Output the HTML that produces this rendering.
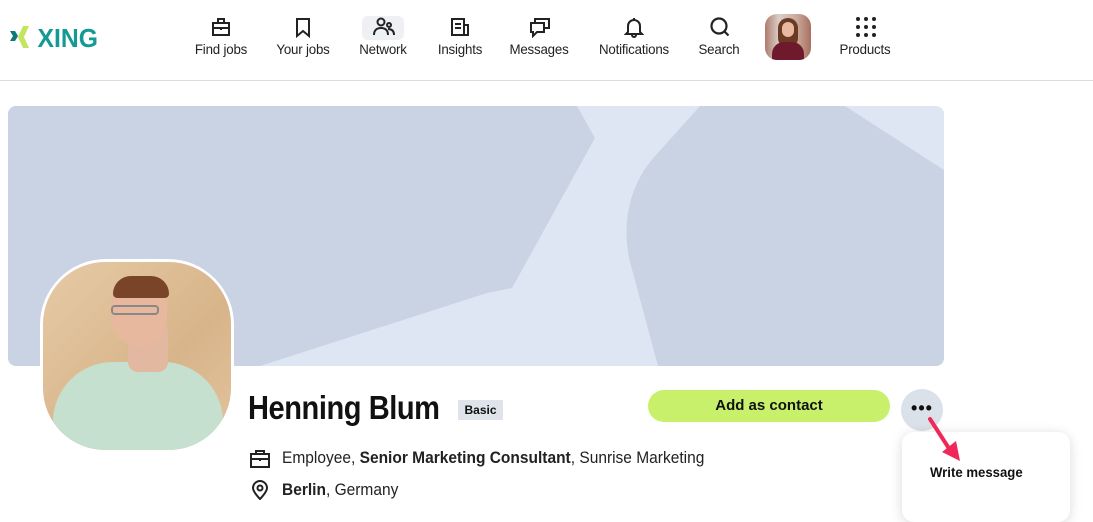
<!DOCTYPE html>
<html><head><meta charset="utf-8"><style>
*{margin:0;padding:0;box-sizing:border-box}
body{width:1093px;height:504px;overflow:hidden;background:#fff;font-family:"Liberation Sans",sans-serif;color:#111;position:relative}
.nav{position:absolute;left:0;top:0;width:1093px;height:81px;border-bottom:1px solid #dcdcdc}
.item{position:absolute;top:0;height:80px;text-align:center;font-size:14px;color:#222}
.item svg{position:absolute;top:16px;left:50%;margin-left:-10px}
.item span{position:absolute;top:41px;left:50%;transform:translateX(-50%) scaleX(0.95);white-space:nowrap;letter-spacing:-0.2px}
.abs{position:absolute}
</style></head><body>
<div class="nav">
  <div class="abs" style="left:10px;top:22px;">
    <svg width="100" height="30" viewBox="0 0 100 30">
      <path d="M0 9 L5 9 L8 14 L5 19 L0 19 L3 14 Z" fill="#0b7a78"/>
      <path d="M13 4 L19 4 L14 15 L19 26 L13 26 L8 15 Z" fill="#c6e55f"/>
      <text x="29" y="25" font-family="Liberation Sans" font-weight="bold" font-size="26" fill="#139a94" transform="scale(0.95,1)">XING</text>
    </svg>
  </div>
  <div class="item" style="left:191px;width:60px"><svg width="20" height="22" viewBox="0 0 20 22" fill="none" stroke="#222" stroke-width="2"><rect x="2" y="7" width="16" height="12"/><path d="M7 7V3h6v4M2 12h16M10 11v3"/></svg><span>Find jobs</span></div>
  <div class="item" style="left:273px;width:60px"><svg width="20" height="22" viewBox="0 0 20 22" fill="none" stroke="#222" stroke-width="2"><path d="M4 3h12v17l-6-5-6 5z"/></svg><span>Your jobs</span></div>
  <div class="abs" style="left:362px;top:16px;width:42px;height:24px;background:#eef0f4;border-radius:6px"></div>
  <div class="item" style="left:353px;width:60px"><svg width="22" height="22" viewBox="0 0 22 22" fill="none" stroke="#222" stroke-width="2"><circle cx="8" cy="6" r="3.5"/><path d="M1 19c0-5 3-7 7-7s7 2 7 7"/><circle cx="16" cy="9" r="2"/><path d="M15 13c4 0 6 2 6 6"/></svg><span>Network</span></div>
  <div class="item" style="left:430px;width:60px"><svg width="20" height="22" viewBox="0 0 20 22" fill="none" stroke="#222" stroke-width="2"><path d="M2 3h12v16H2zM14 9h4v10h-4M5 8h6M5 12h6"/></svg><span>Insights</span></div>
  <div class="item" style="left:505px;width:68px"><svg width="22" height="22" viewBox="0 0 22 22" fill="none" stroke="#222" stroke-width="2"><path d="M2 7h13v9H8l-4 4v-4H2zM6 7V3h14v9h-5"/></svg><span>Messages</span></div>
  <div class="item" style="left:592px;width:84px"><svg width="20" height="22" viewBox="0 0 20 22" fill="none" stroke="#222" stroke-width="2"><path d="M10 2v2M4 16V10a6 6 0 0112 0v6l2 2H2zM8 19a2 2 0 004 0"/></svg><span>Notifications</span></div>
  <div class="item" style="left:694px;width:50px"><svg width="22" height="22" viewBox="0 0 22 22" fill="none" stroke="#222" stroke-width="2.2"><circle cx="10" cy="10" r="7.5"/><path d="M15.5 15.5l4 4"/></svg><span>Search</span></div>
  <div class="abs" style="left:765px;top:14px;width:46px;height:46px;border-radius:12px;overflow:hidden;background:linear-gradient(90deg,#b07a6c,#d8cfc8 30%,#c9a89a 70%,#a87060)">
    <div class="abs" style="left:13px;top:4px;width:20px;height:30px;border-radius:10px;background:#6a3a22"></div>
    <div class="abs" style="left:17px;top:8px;width:12px;height:15px;border-radius:6px;background:#e8b8a0"></div>
    <div class="abs" style="left:7px;top:28px;width:32px;height:22px;border-radius:12px 12px 0 0;background:#6e1a2c"></div>
  </div>
  <div class="item" style="left:835px;width:60px"><svg width="22" height="22" viewBox="0 0 22 22" fill="#222"><circle cx="3" cy="3" r="2"/><circle cx="11" cy="3" r="2"/><circle cx="19" cy="3" r="2"/><circle cx="3" cy="11" r="2"/><circle cx="11" cy="11" r="2"/><circle cx="19" cy="11" r="2"/><circle cx="3" cy="19" r="2"/><circle cx="11" cy="19" r="2"/><circle cx="19" cy="19" r="2"/></svg><span>Products</span></div>
</div>

<svg class="abs" style="left:8px;top:106px" width="936" height="260" viewBox="8 106 936 260">
  <defs><clipPath id="c"><rect x="8" y="106" width="936" height="260" rx="8"/></clipPath></defs>
  <g clip-path="url(#c)">
    <rect x="8" y="106" width="936" height="260" fill="#dfe6f3"/>
    <path d="M8 106 L577 106 L595 138 L512 288 L487 293 L260 366 L8 366Z" fill="#c9d3e3"/>
    <path d="M700 106 L845 106 L944 170 L944 366 L658 366 L630 262 Q622 228 632 196 Q640 172 656 155 Z" fill="#c9d3e3"/>
  </g>
</svg>

<div class="abs" style="left:40px;top:259px;width:194px;height:194px;border-radius:34%/34%;background:#fff;padding:3px">
  <div style="width:100%;height:100%;border-radius:33%;overflow:hidden;position:relative;background:linear-gradient(135deg,#e6cba6,#d8b48a 60%,#e2c49e)">
    <div class="abs" style="left:10px;top:100px;width:170px;height:110px;border-radius:60px 60px 0 0;background:#c6e0d0"></div>
    <div class="abs" style="left:85px;top:60px;width:40px;height:50px;background:#e2b8a0;border-radius:10px"></div>
    <div class="abs" style="left:68px;top:18px;width:56px;height:66px;border-radius:26px 26px 28px 28px;background:#e8b89e"></div>
    <div class="abs" style="left:70px;top:14px;width:56px;height:22px;border-radius:26px 26px 6px 6px;background:#7a4428"></div>
    <div class="abs" style="left:68px;top:43px;width:48px;height:10px;border:2px solid #888;border-radius:4px"></div>
  </div>
</div>

<div class="abs" style="left:248px;top:389px;font-size:33px;font-weight:bold;letter-spacing:-0.5px;color:#111;transform:scaleX(0.88);transform-origin:left top;white-space:nowrap">Henning Blum</div>
<div class="abs" style="left:458px;top:400px;width:45px;height:20px;background:#dfe3ea;font-size:12px;font-weight:bold;text-align:center;line-height:20px">Basic</div>

<svg class="abs" style="left:250px;top:449px" width="20" height="20" viewBox="0 0 20 20" fill="none" stroke="#222" stroke-width="2"><rect x="1" y="5" width="18" height="13"/><path d="M6 5V2h8v3M1 10h18M10 9v3"/></svg>
<div class="abs" style="left:282px;top:449px;font-size:16.5px;color:#222;transform:scaleX(0.94);transform-origin:left top;white-space:nowrap">Employee, <b>Senior Marketing Consultant</b>, Sunrise Marketing</div>
<svg class="abs" style="left:251px;top:480px" width="18" height="20" viewBox="0 0 18 20" fill="none" stroke="#222" stroke-width="2"><path d="M9 19s-7-7-7-11a7 7 0 0114 0c0 4-7 11-7 11z"/><circle cx="9" cy="8" r="2.5"/></svg>
<div class="abs" style="left:282px;top:481px;font-size:16.5px;color:#222;transform:scaleX(0.94);transform-origin:left top;white-space:nowrap"><b>Berlin</b>, Germany</div>

<div class="abs" style="left:648px;top:390px;width:242px;height:32px;border-radius:16px;background:#c8f06a;text-align:center;line-height:32px;font-size:15px;font-weight:bold">Add as contact</div>
<div class="abs" style="left:901px;top:389px;width:42px;height:42px;border-radius:50%;background:#dbe1e8;text-align:center;line-height:38px;font-size:18px;font-weight:bold;letter-spacing:1px">•••</div>

<div class="abs" style="left:902px;top:432px;width:168px;height:90px;background:#fff;border-radius:12px;box-shadow:0 2px 12px rgba(0,0,0,0.15)"></div>
<div class="abs" style="left:930px;top:464px;font-size:14px;font-weight:bold;color:#111;transform:scaleX(0.94);transform-origin:left top;white-space:nowrap">Write message</div>
<svg class="abs" style="left:920px;top:410px" width="60" height="60" viewBox="0 0 60 60"><path d="M10 9 L30 40" stroke="#f0285a" stroke-width="4" stroke-linecap="round"/><path d="M22 42 L40 51 L36 31 Z" fill="#f0285a"/></svg>
</body></html>
